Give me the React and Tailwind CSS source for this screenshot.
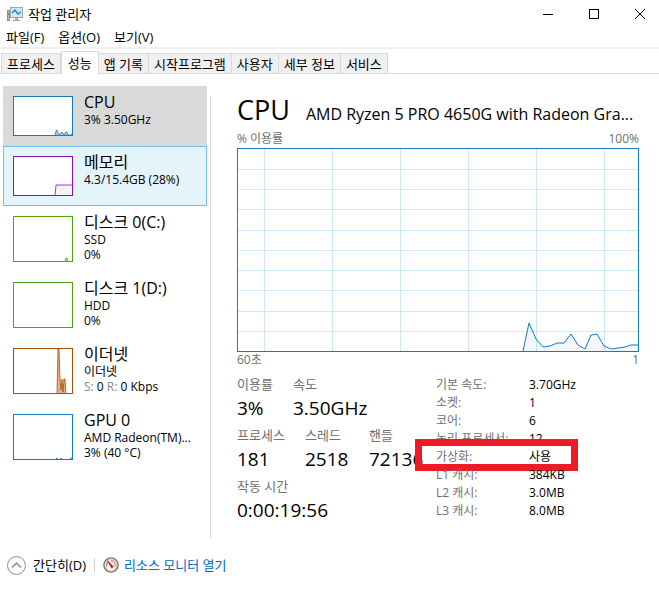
import React, { useState } from 'react';

const menus = ['파일(F)', '옵션(O)', '보기(V)'];

const tabs = ['프로세스', '성능', '앱 기록', '시작프로그램', '사용자', '세부 정보', '서비스'];

const devices = [
  {
    id: 'cpu',
    name: 'CPU',
    lines: ['3% 3.50GHz'],
    color: '#117dbb',
    fill: '#a9cfe5',
    height: 40,
    points: '42,40 43,35 44,34 45,38 47,38 49,36 51,39 53,36 54,36 55,39 57,39 60,38 60,40',
  },
  {
    id: 'memory',
    name: '메모리',
    lines: ['4.3/15.4GB (28%)'],
    color: '#8b12ae',
    fill: '#f4f2f4',
    height: 40,
    points: '42,40 43,29 60,29 60,40',
    hovered: true,
  },
  {
    id: 'disk0',
    name: '디스크 0(C:)',
    lines: ['SSD', '0%'],
    color: '#4da60c',
    fill: '#b8dba0',
    height: 46,
    points: '52,46 53,42 54,42 55,46',
  },
  {
    id: 'disk1',
    name: '디스크 1(D:)',
    lines: ['HDD', '0%'],
    color: '#4da60c',
    height: 46,
  },
  {
    id: 'ethernet',
    name: '이더넷',
    lines: ['이더넷'],
    network: true,
    color: '#a74f01',
    fill: '#e3b08a',
    height: 46,
    points: '44,46 45,1 46,1 47,31 48,42 49,31 50,44 51,31 52,31 53,46',
  },
  {
    id: 'gpu',
    name: 'GPU 0',
    lines: ['AMD Radeon(TM)...', '3% (40 °C)'],
    color: '#117dbb',
    fill: '#a9cfe5',
    height: 46,
    points: '42,46 44,44 46,46 48,44 50,46 56,46 58,44 60,44',
  },
];

const details = [
  ['기본 속도:', '3.70GHz'],
  ['소켓:', '1'],
  ['코어:', '6'],
  ['논리 프로세서:', '12'],
  ['가상화:', '사용'],
  ['L1 캐시:', '384KB'],
  ['L2 캐시:', '3.0MB'],
  ['L3 캐시:', '8.0MB'],
];

const gridX = [27, 95, 163, 231, 299, 367];
const gridY = [21, 41, 61, 82, 102, 122, 142, 163, 183];

const usage =
  '286,203 292,175 299,191 306,199 313,198 320,195 327,195 334,186 341,197 348,201 354,187 360,186 367,198 374,201 381,200 388,199 394,197 401,197';

const AppIcon = () => (
  <svg width="16" height="16" viewBox="0 0 16 16" aria-hidden="true">
    <rect x="0.5" y="4.5" width="2" height="10" fill="#b9bcbe" stroke="#8b8f92" />
    <rect x="1" y="7" width="1" height="2" fill="#4fa94a" />
    <rect x="3.5" y="1.5" width="12" height="10" fill="#c9ecfa" stroke="#a3a7aa" />
    <path d="M5 7l3-3 3 4 3-2" fill="none" stroke="#1c87b8" strokeWidth="1.3" />
    <path d="M8 12h3v2h2v1H6v-1h2z" fill="#a3a7aa" />
  </svg>
);

const MonitorIcon = () => (
  <svg width="16" height="16" viewBox="0 0 16 16" aria-hidden="true">
    <circle cx="8" cy="8" r="7.1" fill="#f7f6f3" stroke="#77736d" strokeWidth="1.4" />
    <circle cx="8" cy="8" r="5.7" fill="none" stroke="#d2cec7" strokeWidth="0.8" />
    <path d="M4.2 10A4.3 4.3 0 0 1 5 5" fill="none" stroke="#8a8a8a" strokeWidth="1.1" />
    <path d="M8 3.7A4.3 4.3 0 0 1 11.8 10" fill="none" stroke="#e08a60" strokeWidth="1.2" />
    <path d="M4.6 3.6l5.6 6.2-1.5 1.2z" fill="#d01118" stroke="#d01118" strokeWidth="0.8" />
  </svg>
);

const Thumb = ({ device }) => (
  <svg
    width="60"
    height={device.height}
    viewBox={`0 0 60 ${device.height}`}
    className="shrink-0"
    aria-hidden="true"
  >
    <rect width="60" height={device.height} fill="#fff" />
    {device.points && (
      <polyline points={device.points} fill={device.fill} stroke={device.color} strokeWidth="0.8" />
    )}
    <rect
      x="0.5"
      y="0.5"
      width="59"
      height={device.height - 1}
      fill="none"
      stroke={device.color}
    />
  </svg>
);

const Stat = ({ label, value, className }) => (
  <div className={className}>
    <dt className="text-[13px] leading-5 text-[#707070]">{label}</dt>
    <dd className="text-[19px] leading-7">{value}</dd>
  </div>
);

const TitleBar = () => (
  <header className="flex h-[27px] items-center justify-between pl-[7px]">
    <div className="flex items-center gap-[5px]">
      <AppIcon />
      <h1 className="text-[13px] leading-5">작업 관리자</h1>
    </div>
    <div className="flex gap-2">
      <button aria-label="최소화" className="flex h-6 w-[38px] items-center justify-center">
        <svg width="10" height="10" viewBox="0 0 10 10">
          <path d="M0 5.5h10" stroke="#000" />
        </svg>
      </button>
      <button aria-label="최대화" className="flex h-6 w-[38px] items-center justify-center">
        <svg width="10" height="10" viewBox="0 0 10 10">
          <rect x="0.5" y="0.5" width="9" height="9" fill="none" stroke="#000" />
        </svg>
      </button>
      <button aria-label="닫기" className="flex h-6 w-[38px] items-center justify-center">
        <svg width="10" height="10" viewBox="0 0 10 10">
          <path d="M0 0l10 10M10 0L0 10" stroke="#000" />
        </svg>
      </button>
    </div>
  </header>
);

const UsageChart = () => (
  <svg
    viewBox="0 0 402 204"
    preserveAspectRatio="none"
    className="block h-[204px] w-full"
    role="img"
    aria-label="CPU 이용률"
  >
    {gridX.map((x) => (
      <path key={x} d={`M${x + 0.5} 1v202`} stroke="#cfe6f3" />
    ))}
    {gridY.map((y) => (
      <path key={y} d={`M1 ${y + 0.5}h400`} stroke="#d3e8f4" />
    ))}
    <polygon points={`${usage} 401,203`} fill="#117dbb" fillOpacity="0.06" />
    <polyline points={usage} fill="none" stroke="#117dbb" />
    <rect x="0.5" y="0.5" width="401" height="203" fill="none" stroke="#117dbb" />
  </svg>
);

const App = () => {
  const [activeTab, setActiveTab] = useState('성능');
  const [selected, setSelected] = useState('cpu');

  return (
    <div className="w-full bg-white font-['Open_Sans','Noto_Sans_CJK_KR',sans-serif] text-black">
      <TitleBar />

      {/* Menu */}
      <nav className="flex h-5 items-center gap-[14px] pl-[6px] text-[13px] leading-5">
        {menus.map((menu) => (
          <button key={menu}>{menu}</button>
        ))}
      </nav>

      {/* Tabs */}
      <div
        role="tablist"
        className="flex h-[27px] items-end border-t-2 border-b border-t-[#f0f0f0] border-b-[#d9d9d9] pl-px text-[13px] leading-5"
      >
        {tabs.map((tab) => (
          <button
            key={tab}
            role="tab"
            aria-selected={tab === activeTab}
            onClick={() => setActiveTab(tab)}
            className={
              tab === activeTab
                ? 'relative -mb-px h-[23px] border border-b-0 border-[#d9d9d9] bg-white px-[6px] whitespace-nowrap'
                : 'h-5 border-t border-r border-[#d9d9d9] bg-[#f0f0f0] px-[5px] whitespace-nowrap first:border-l'
            }
          >
            {tab}
          </button>
        ))}
      </div>

      <div className="flex pt-3 pl-[3px]">
        {/* Devices */}
        <aside className="w-[204px] shrink-0">
          {devices.map((device) => (
            <button
              key={device.id}
              onClick={() => setSelected(device.id)}
              className={`flex w-full gap-[11px] border py-[9px] pl-[9px] text-left ${
                device.id === selected
                  ? 'border-[#d9d9d9] bg-[#d9d9d9]'
                  : device.hovered
                    ? 'border-[#70c0e7] bg-[#e5f3fb]'
                    : 'border-transparent'
              }`}
            >
              <Thumb device={device} />
              <span className="-my-1 block whitespace-nowrap">
                <span className="block text-base leading-5">{device.name}</span>
                {device.lines.map((line) => (
                  <span key={line} className="block text-xs leading-[15px]">
                    {line}
                  </span>
                ))}
                {device.network && (
                  <span className="block text-xs leading-[15px]">
                    <span className="text-[#8a8a8a]">S:</span> 0{' '}
                    <span className="text-[#8a8a8a]">R:</span> 0 Kbps
                  </span>
                )}
              </span>
            </button>
          ))}
        </aside>

        <div className="mt-[10px] ml-[3px] w-px shrink-0 bg-[#d9d9d9]" />

        {/* CPU */}
        <main className="min-w-0 flex-1 pr-5 pb-[14px] pl-[26px]">
          <div className="flex items-baseline gap-4 pt-1">
            <h2 className="text-[27px] leading-10">CPU</h2>
            <p className="min-w-0 flex-1 truncate text-base">
              AMD Ryzen 5 PRO 4650G with Radeon Gra...
            </p>
          </div>
          <div className="flex justify-between text-xs leading-[18px] text-[#707070]">
            <span>% 이용률</span>
            <span>100%</span>
          </div>
          <UsageChart />
          <div className="flex justify-between text-xs leading-4 text-[#707070]">
            <span>60초</span>
            <span>1</span>
          </div>

          <div className="flex pt-[6px]">
            <dl className="flex w-[199px] shrink-0 flex-col gap-[3px]">
              <div className="flex">
                <Stat label="이용률" value="3%" className="w-14" />
                <Stat label="속도" value="3.50GHz" />
              </div>
              <div className="flex">
                <Stat label="프로세스" value="181" className="w-[68px]" />
                <Stat label="스레드" value="2518" className="w-16" />
                <Stat label="핸들" value="72136" />
              </div>
              <Stat label="작동 시간" value="0:00:19:56" />
            </dl>

            <dl className="pt-[2px] text-xs leading-[18px] whitespace-nowrap">
              {details.map(([label, value]) => (
                <div key={label} className="relative flex">
                  <dt className="w-[93px] text-[#707070]">{label}</dt>
                  <dd>{value}</dd>
                  {label === '가상화:' && (
                    <div className="absolute -top-[9px] -left-[21px] h-8 w-[163px] border-[7px] border-[#ed1c24]" />
                  )}
                </div>
              ))}
            </dl>
          </div>
        </main>
      </div>

      <footer className="flex items-center pt-[17px] pb-3 pl-[7px] text-[13px] leading-5">
        <button className="flex items-center gap-[7px]">
          <svg width="19" height="19" viewBox="0 0 19 19" aria-hidden="true">
            <circle cx="9.5" cy="9.5" r="9" fill="none" stroke="#8c8c8c" />
            <path d="M5 11.5l4.5-4.5 4.5 4.5" fill="none" stroke="#a0a0a0" strokeWidth="1.8" />
          </svg>
          간단히(D)
        </button>
        <span className="mx-2 h-[14px] w-px bg-[#d0d0d0]" />
        <a href="#monitor" className="flex items-center gap-[5px] text-[#0066cc]">
          <MonitorIcon />
          리소스 모니터 열기
        </a>
      </footer>
    </div>
  );
};

export default App;
